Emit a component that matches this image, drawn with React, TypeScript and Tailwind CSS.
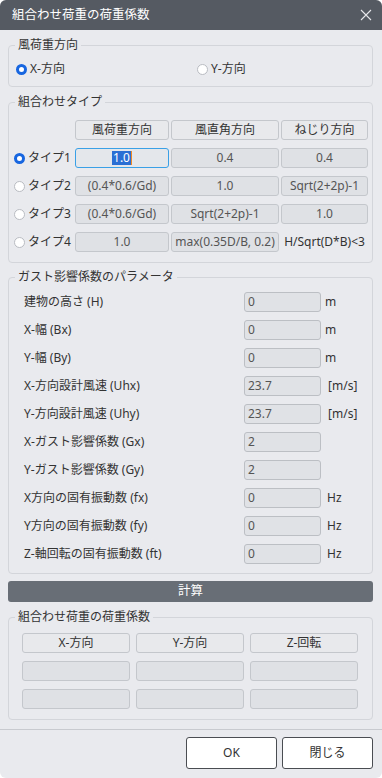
import React from 'react';

const font = { fontFamily: "'Noto Sans', 'Noto Sans CJK JP', sans-serif" };

function Radio({ checked }: { checked?: boolean }) {
    return checked ? (
        <span className="inline-block w-[11px] h-[11px] rounded-full border-[3px] border-[#1766e0] bg-white shrink-0" />
    ) : (
        <span className="inline-block w-[11px] h-[11px] rounded-full border border-[#b9bcc2] bg-white shrink-0" />
    );
}

function Group({ title, children, className }: { title: string; children: React.ReactNode; className?: string }) {
    return (
        <fieldset className={"mx-[8px] mr-[9px] border border-[#d3d5da] rounded-[4px] " + (className ?? '')}>
            <legend className="ml-[6px] px-[3px] text-[12px] leading-[18px] text-[#333]">{title}</legend>
            {children}
        </fieldset>
    );
}

const headCell = "h-[20px] flex items-center justify-center bg-[#e8e9ec] border border-[#c4c7cc] rounded-[3px] text-[12px] text-[#333]";
const dataCell = "h-[20px] flex items-center justify-center bg-[#dfe1e5] border border-[#c4c7cc] rounded-[3px] text-[12px] text-[#555]";

const typeRows = [
    ['(0.4*0.6/Gd)', '1.0', 'Sqrt(2+2p)-1'],
    ['(0.4*0.6/Gd)', 'Sqrt(2+2p)-1', '1.0'],
    ['1.0', 'max(0.35D/B, 0.2)', null],
];

const params = [
    ['建物の高さ (H)', '0', 'm'],
    ['X-幅 (Bx)', '0', 'm'],
    ['Y-幅 (By)', '0', 'm'],
    ['X-方向設計風速 (Uhx)', '23.7', '[m/s]'],
    ['Y-方向設計風速 (Uhy)', '23.7', '[m/s]'],
    ['X-ガスト影響係数 (Gx)', '2', ''],
    ['Y-ガスト影響係数 (Gy)', '2', ''],
    ['X方向の固有振動数 (fx)', '0', 'Hz'],
    ['Y方向の固有振動数 (fy)', '0', 'Hz'],
    ['Z-軸回転の固有振動数 (ft)', '0', 'Hz'],
];

export default function App() {
    return (
        <div className="w-[382px] h-[778px] bg-white" style={font}>
            <div className="w-[382px] h-[778px] bg-[#e9eaee] rounded-[6px] overflow-hidden flex flex-col">
                {/* title bar */}
                <div className="h-[30px] bg-[#555a62] flex items-center justify-between pl-[12px] pr-[10px] shrink-0">
                    <span className="text-white text-[12.5px]">組合わせ荷重の荷重係数</span>
                    <svg width="12" height="12" viewBox="0 0 12 12" fill="none">
                        <path d="M1 1l10 10M11 1L1 11" stroke="#e6e7ea" strokeWidth="1.1" />
                    </svg>
                </div>

                <div className="h-[6px]" />

                <Group title="風荷重方向" className="pb-[9px]">
                    <div className="flex items-center h-[16px] mt-[7px] text-[12px] text-[#333]">
                        <div className="flex items-center gap-[3px] pl-[7px] w-[188px]">
                            <Radio checked />
                            <span>X-方向</span>
                        </div>
                        <div className="flex items-center gap-[3px]">
                            <Radio />
                            <span>Y-方向</span>
                        </div>
                    </div>
                </Group>

                <div className="h-[6px]" />

                <Group title="組合わせタイプ" className="pb-[10px]">
                    <div className="grid grid-cols-[64px_94px_108px_87px] gap-x-[2px] gap-y-[8px] mt-[9px] text-[12px]">
                        <div />
                        <div className={headCell}>風荷重方向</div>
                        <div className={headCell}>風直角方向</div>
                        <div className={headCell}>ねじり方向</div>

                        <div className="flex items-center gap-[3px] pl-[5px] text-[#333]">
                            <Radio checked />
                            <span>タイプ1</span>
                        </div>
                        <div className="h-[20px] flex items-center justify-center bg-[#e4e7eb] border border-[#3aa0e6] rounded-[3px] text-[12px]">
                            <span className="bg-[#2a6fd4] text-white leading-[14px] px-[1px]">1.0</span>
                            <span className="w-[1px] h-[14px] bg-[#f08a24]" />
                        </div>
                        <div className={dataCell}>0.4</div>
                        <div className={dataCell}>0.4</div>

                        {typeRows.map((r, i) => (
                            <React.Fragment key={i}>
                                <div className="flex items-center gap-[3px] pl-[5px] text-[#333]">
                                    <Radio />
                                    <span>タイプ{i + 2}</span>
                                </div>
                                <div className={dataCell}>{r[0]}</div>
                                <div className={dataCell}>{r[1]}</div>
                                {r[2] === null ? (
                                    <div className="h-[20px] flex items-center justify-center text-[12px] text-[#333]">H/Sqrt(D*B)&lt;3</div>
                                ) : (
                                    <div className={dataCell}>{r[2]}</div>
                                )}
                            </React.Fragment>
                        ))}
                    </div>
                </Group>

                <div className="h-[5px]" />

                <Group title="ガスト影響係数のパラメータ" className="pb-[9px]">
                    <div className="flex flex-col gap-[8px] mt-[6px]">
                        {params.map(([label, val, unit], i) => (
                            <div key={i} className="flex items-center h-[20px] text-[12px] text-[#333]">
                                <span className="pl-[15px] w-[235px]">{label}</span>
                                <div className="w-[77px] h-[20px] bg-[#e0e2e6] border border-[#bcbfc4] rounded-[3px] flex items-center pl-[3px] text-[#555]">
                                    {val}
                                </div>
                                <span className={unit === '[m/s]' ? 'pl-[7px]' : unit === 'Hz' ? 'pl-[6px]' : 'pl-[4px]'}>{unit}</span>
                            </div>
                        ))}
                    </div>
                </Group>

                <div className="mx-[8px] mr-[9px] mt-[7px] h-[21px] bg-[#686e76] rounded-[3px] flex items-center justify-center text-white text-[12.5px]">
                    計算
                </div>

                <div className="h-[6px]" />

                <Group title="組合わせ荷重の荷重係数" className="pb-[10px]">
                    <div className="grid grid-cols-[108px_108px_108px] gap-x-[6px] gap-y-[8px] mt-[7px] pl-[13px]">
                        <div className={headCell}>X-方向</div>
                        <div className={headCell}>Y-方向</div>
                        <div className={headCell}>Z-回転</div>
                        {Array.from({ length: 6 }).map((_, i) => (
                            <div key={i} className={dataCell} />
                        ))}
                    </div>
                </Group>

                <div className="mt-[9px] border-t border-[#c8cacf]" />

                <div className="flex justify-end gap-[5px] pr-[9px] pt-[7px]">
                    <button className="w-[91px] h-[32px] bg-white border border-[#4a4d52] rounded-[3px] text-[12px] text-[#333]">OK</button>
                    <button className="w-[91px] h-[32px] bg-white border border-[#4a4d52] rounded-[3px] text-[12px] text-[#333]">閉じる</button>
                </div>
            </div>
        </div>
    );
}
